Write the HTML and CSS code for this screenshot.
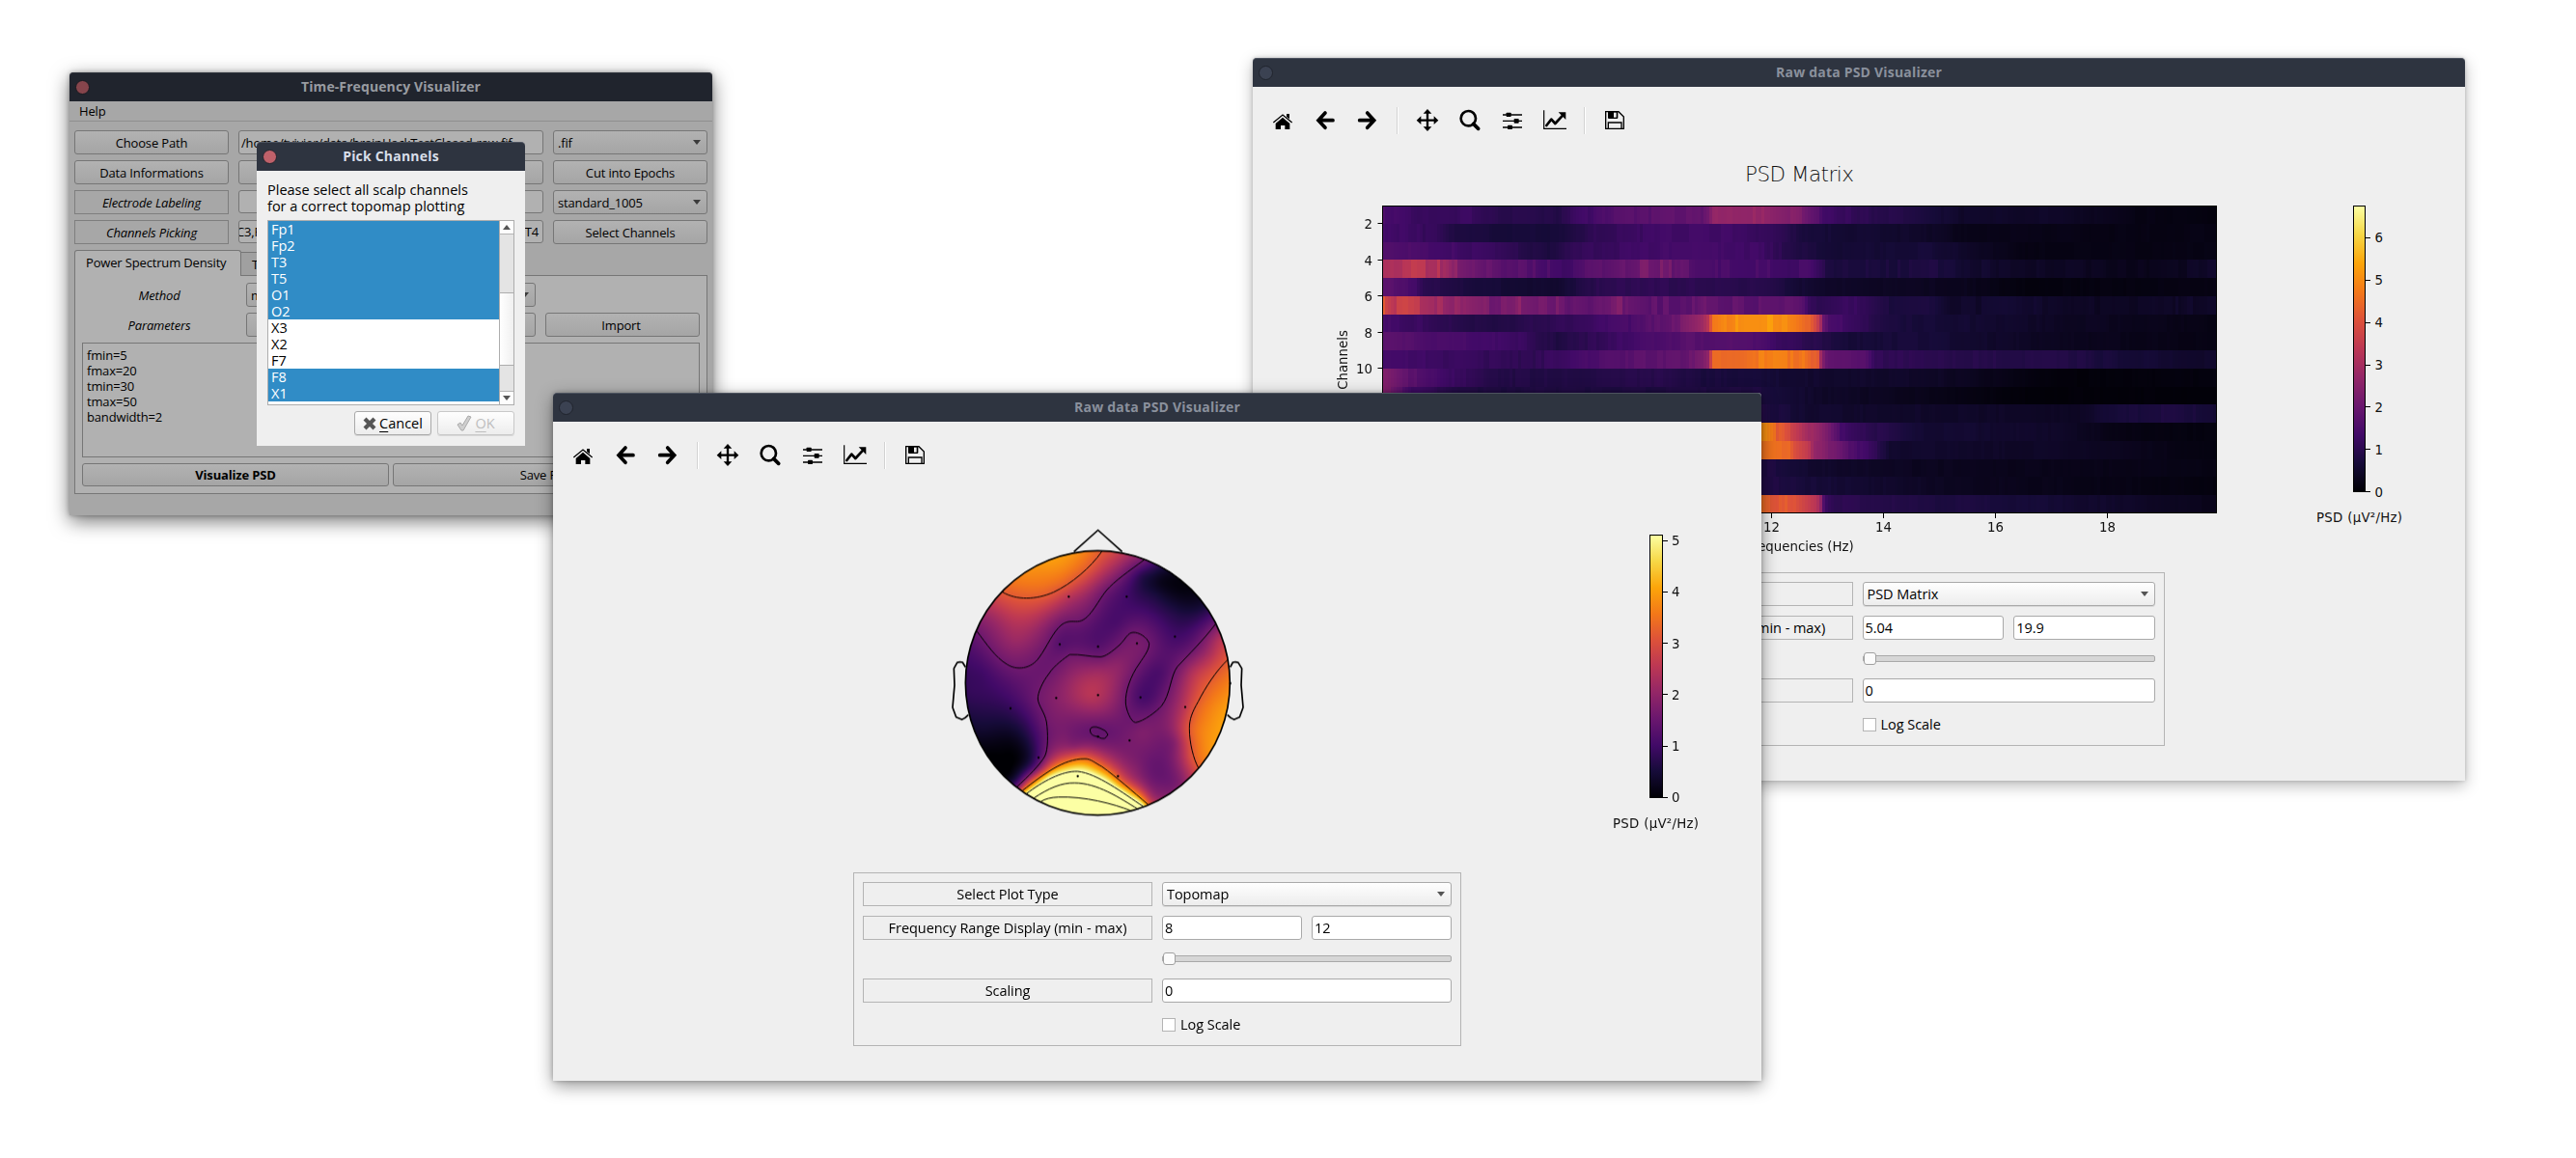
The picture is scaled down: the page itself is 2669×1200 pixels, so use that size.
FILE: index.html
```html
<!DOCTYPE html>
<html lang="en">
<head>
<meta charset="utf-8">
<title>Time-Frequency Visualizer</title>
<link rel="stylesheet" href="styles.css">
</head>
<body>
<svg class="defs" width="0" height="0" aria-hidden="true">
  <defs>
    <linearGradient id="inferno" x1="0" y1="1" x2="0" y2="0">
      <stop offset="0" stop-color="#000004"/><stop offset=".1" stop-color="#160b39"/>
      <stop offset=".2" stop-color="#420a68"/><stop offset=".3" stop-color="#6a176e"/>
      <stop offset=".4" stop-color="#932667"/><stop offset=".5" stop-color="#bc3754"/>
      <stop offset=".6" stop-color="#dd513a"/><stop offset=".7" stop-color="#f37819"/>
      <stop offset=".8" stop-color="#fca50a"/><stop offset=".9" stop-color="#f6d746"/>
      <stop offset="1" stop-color="#fcffa4"/>
    </linearGradient>
    <symbol id="i-home" viewBox="0 0 72 72"><path d="M7 42 36 18 65 42" fill="none" stroke="#000" stroke-width="4"/><path d="M48 15h9v16l-9-7zM14 45 36 26l22 19v18H43V51H30v12H14z"/></symbol>
    <symbol id="i-back" viewBox="0 0 72 72"><path d="M36 12 15 35l21 23M18 35h42" fill="none" stroke="#000" stroke-width="11" stroke-linecap="round"/></symbol>
    <symbol id="i-fwd" viewBox="0 0 72 72"><path d="M35 12 56 35 35 58M53 35H11" fill="none" stroke="#000" stroke-width="11" stroke-linecap="round"/></symbol>
    <symbol id="i-move" viewBox="0 0 72 72"><path d="M36 8v56M8 35h56" stroke="#000" stroke-width="7"/><path d="M36 0 49 14H23zM36 69 23 55h26zM2 35 16 22v26zM70 35 56 48V22z"/></symbol>
    <symbol id="i-zoom" viewBox="0 0 72 72"><circle cx="31" cy="29" r="23" fill="none" stroke="#000" stroke-width="8"/><path d="M47 46 62 61" stroke="#000" stroke-width="11" stroke-linecap="round"/></symbol>
    <symbol id="i-sub" viewBox="0 0 72 72"><path d="M6 18h60M6 37h60M6 57h60" stroke="#000" stroke-width="4"/><rect x="17" y="11" width="15" height="13" rx="2"/><rect x="41" y="30" width="15" height="14" rx="2"/><rect x="21" y="50" width="15" height="13" rx="2"/></symbol>
    <symbol id="i-edit" viewBox="0 0 72 72"><path d="M2 4v57h70" fill="none" stroke="#000" stroke-width="3.5"/><path d="M10 51 25 32l12 13 24-26" fill="none" stroke="#000" stroke-width="8" stroke-linejoin="round" stroke-linecap="round"/><path d="M47 10h23v23z"/></symbol>
    <symbol id="i-save" viewBox="0 0 72 72"><path d="M8 8h40l16 16v37H8zM16 61V42h41v19" fill="none" stroke="#000" stroke-width="4"/><path d="M15 8h31v19q0 3-3 3H18q-3 0-3-3z"/><rect x="33" y="11" width="8" height="15" fill="#efefef"/></symbol>
  </defs>
</svg>

<div class="window main">
  <header class="titlebar"><i class="close"></i><span>Time-Frequency Visualizer</span></header>
  <nav class="menu">Help</nav>
  <div class="form">
    <div class="btn">Choose Path</div><div class="field path">/home/tvivier/data/brainHackTestClosed-raw.fif</div><div class="btn combo">.fif<b class="arrow"></b></div>
    <div class="btn">Data Informations</div><div class="btn"></div><div class="btn">Cut into Epochs</div>
    <div class="lbl">Electrode Labeling</div><div class="field"></div><div class="btn combo">standard_1005<b class="arrow"></b></div>
    <div class="lbl">Channels Picking</div><div class="field picks"><span>C3,F4,Fz</span><span>P4,T6,T4</span></div><div class="btn">Select Channels</div>
  </div>
  <div class="tabs"><div class="tab on">Power Spectrum Density</div><div class="tab">Time-Frequency</div></div>
  <div class="pane">
    <div class="row"><div class="cap">Method</div><div class="btn combo wide">multitaper<b class="arrow"></b></div></div>
    <div class="row"><div class="cap">Parameters</div><div class="btn wide"></div><div class="btn imp">Import</div></div>
    <div class="area">fmin=5<br>fmax=20<br>tmin=30<br>tmax=50<br>bandwidth=2</div>
    <div class="row actions"><div class="btn strong">Visualize PSD</div><div class="btn">Save PSD</div></div>
  </div>
</div>

<div class="window dialog">
  <header class="titlebar"><i class="close"></i><span>Pick Channels</span></header>
  <p class="ask">Please select all scalp channels<br>for a correct topomap plotting</p>
  <div class="list">
    <ul>
      <li class="sel">Fp1</li><li class="sel">Fp2</li><li class="sel">T3</li><li class="sel">T5</li><li class="sel">O1</li><li class="sel">O2</li>
      <li>X3</li><li>X2</li><li>F7</li><li class="sel">F8</li><li class="sel">X1</li>
    </ul>
    <div class="scroll"><div class="end"><b class="arrow up"></b></div><div class="thumb"></div><div class="end"><b class="arrow"></b></div></div>
  </div>
  <div class="buttons">
    <div class="btn"><svg width="14" height="14" viewBox="0 0 14 14"><path d="M3.5 3.5l7 7M10.500 3.500l-7 7" stroke="#555" stroke-width="4.200" stroke-linecap="square"/></svg><span><u>C</u>ancel</span></div>
    <div class="btn off"><svg width="16" height="17" viewBox="0 0 16 17"><path d="M1 10l3-2 2 3 6-10 3 1-8 14H5z" fill="#cfcfcf" stroke="#aaa"/></svg><span><u>O</u>K</span></div>
  </div>
</div>

<div class="window matrix">
  <header class="titlebar"><i class="close"></i><span>Raw data PSD Visualizer</span></header>
  <div class="toolbar">
    <svg><use href="#i-home"/></svg><svg><use href="#i-back"/></svg><svg><use href="#i-fwd"/></svg><hr>
    <svg><use href="#i-move"/></svg><svg><use href="#i-zoom"/></svg><svg><use href="#i-sub"/></svg><svg><use href="#i-edit"/></svg><hr>
    <svg><use href="#i-save"/></svg>
  </div>
  <svg class="figure" width="1256" height="433" viewBox="1298 160 1256 433">
    <text class="thin" x="1808" y="188" textLength="113">PSD Matrix</text>
    <foreignObject x="1432" y="213" width="865" height="319"><canvas id="heat" width="865" height="319"></canvas></foreignObject>
    <rect class="frame" x="1432.500" y="213.500" width="864" height="318"/>
    <path class="tick" d="M1427.500 231.500h5M1427.500 269.500h5M1427.500 306.500h5M1427.500 344.500h5M1427.500 381.500h5M1835.500 532v5M1951.500 532v5M2067.500 532v5M2183.500 532v5"/>
    <g class="end-text"><text x="1422" y="236.500">2</text><text x="1422" y="274.500">4</text><text x="1422" y="311.500">6</text><text x="1422" y="349.500">8</text><text x="1422" y="386.500">10</text></g>
    <g class="mid-text"><text x="1835.500" y="551">12</text><text x="1951.500" y="551">14</text><text x="2067.500" y="551">16</text><text x="2183.500" y="551">18</text><text x="1865" y="571">Frequencies (Hz)</text><text transform="translate(1396 373) rotate(-90)">Channels</text></g>
    <rect class="frame" x="2438.500" y="213.500" width="12" height="296" fill="url(#inferno)"/>
    <path class="tick" d="M2451 246.500h5M2451 290.500h5M2451 334.500h5M2451 378.500h5M2451 421.500h5M2451 465.500h5M2451 509.500h5"/>
    <g><text x="2460.500" y="251">6</text><text x="2460.500" y="295">5</text><text x="2460.500" y="339">4</text><text x="2460.500" y="383">3</text><text x="2460.500" y="427">2</text><text x="2460.500" y="471">1</text><text x="2460.500" y="515">0</text><text x="2400" y="541" textLength="89">PSD (µV²/Hz)</text></g>
  </svg>
  <div class="panel">
    <div class="lbl">Select Plot Type</div><div class="btn combo">PSD Matrix<b class="arrow"></b></div>
    <div class="lbl">Frequency Range Display (min - max)</div><div class="pair"><div class="field">5.04</div><div class="field">19.9</div></div>
    <div></div><div class="slider"><i></i></div>
    <div class="lbl">Scaling</div><div class="field">0</div>
    <div></div><div class="check"><i></i>Log Scale</div>
  </div>
</div>

<div class="window topo">
  <header class="titlebar"><i class="close"></i><span>Raw data PSD Visualizer</span></header>
  <div class="toolbar">
    <svg><use href="#i-home"/></svg><svg><use href="#i-back"/></svg><svg><use href="#i-fwd"/></svg><hr>
    <svg><use href="#i-move"/></svg><svg><use href="#i-zoom"/></svg><svg><use href="#i-sub"/></svg><svg><use href="#i-edit"/></svg><hr>
    <svg><use href="#i-save"/></svg>
  </div>
  <svg class="figure" width="1252" height="397" viewBox="573 507 1252 397">
    <foreignObject x="970" y="530" width="340" height="330"><canvas id="scalp" width="340" height="330"></canvas></foreignObject>
    <svg x="970" y="530" width="340" height="330" viewBox="0 0 1020 990" fill="none" stroke="#000">
      <g stroke-width="5" stroke-linejoin="round">
        <circle cx="502" cy="533" r="411"/>
        <path d="M428 125 503 58 578 125"/>
        <path d="M91 484 82 469Q73 466 65 470L55 488 57 540 51 609 62 639 80 647Q90 643 100 632M914 484 922 469Q931 466 939 470L950 488 948 540 954 609 943 639 926 647Q915 643 905 632"/>
      </g>
      <g stroke-width="3">
        <path d="M515 124C480 175 420 225 365 251C310 275 250 277 205 250"/>
        <path d="M647 150C600 185 555 215 528 247C500 282 475 341 440 342C425 343 410 338 390 352C362 375 345 420 320 454C295 490 250 495 220 475C185 455 155 410 127 373"/>
        <path d="M868 350C835 395 780 450 750 482C728 510 728 570 700 605C685 622 645 652 620 656C605 656 590 615 589 595C587 560 605 510 630 475C650 445 662 430 662 410C655 390 630 375 612 376C595 377 590 395 570 415C545 437 525 452 510 452C475 452 450 443 415 445C400 455 365 480 350 505C330 530 315 565 316 583C318 605 338 625 343 655C348 690 348 740 338 760C325 785 285 825 250 857"/>
        <path d="M907 460C870 495 835 550 815 590C795 625 787 645 787 675C787 720 800 770 815 797"/>
        <path d="M268 868C330 820 395 768 462 769C480 768 495 783 515 793C560 825 610 870 660 912"/>
        <path d="M280 878C330 840 390 806 440 808C500 814 580 875 645 918"/>
        <path d="M302 892C350 860 390 843 430 844C500 844 570 890 628 926"/>
        <path d="M325 902Q345 889 380 888C460 885 550 908 607 931"/>
        <path d="M482 672Q475 678 480 688 484 698 502 700 514 708 524 706L534 694 526 682Q508 672 498 670 488 669 482 672z"/>
      </g>
      <path class="dots" d="M412 265h.1M592 265h.1M384 413h.1M503 420h.1M624 410h.1M742 389h.1M373 580h.1M503 571h.1M635 578h.1M774 608h.1M231 612h.1M503 700h.1M601 712h.1M318 765h.1M440 823h.1M565 823h.1M914 534h.1"/>
    </svg>
    <rect class="frame" x="1709.500" y="554.500" width="13" height="272" fill="url(#inferno)"/>
    <path class="tick" d="M1723 560.500h5M1723 613.500h5M1723 666.500h5M1723 719.500h5M1723 773.500h5M1723 826.500h5"/>
    <g><text x="1732" y="565">5</text><text x="1732" y="618">4</text><text x="1732" y="672">3</text><text x="1732" y="725">2</text><text x="1732" y="778">1</text><text x="1732" y="831">0</text><text x="1671" y="858" textLength="89">PSD (µV²/Hz)</text></g>
  </svg>
  <div class="panel">
    <div class="lbl">Select Plot Type</div><div class="btn combo">Topomap<b class="arrow"></b></div>
    <div class="lbl">Frequency Range Display (min - max)</div><div class="pair"><div class="field">8</div><div class="field">12</div></div>
    <div></div><div class="slider"><i></i></div>
    <div class="lbl">Scaling</div><div class="field">0</div>
    <div></div><div class="check"><i></i>Log Scale</div>
  </div>
</div>
<script src="plots.js"></script>
</body>
</html>
```
FILE: styles.css
```css
* { box-sizing: border-box; }
body { margin: 0; width: 2669px; height: 1200px; position: relative; overflow: hidden; background: #fff; color: #000; font-family: "Open Sans", "Noto Sans", sans-serif; }
.defs { position: absolute; }

/* windows on the desktop */
.window { position: absolute; isolation: isolate; display: flex; flex-direction: column; background: #efefef; border-radius: 4px 4px 0 0; font-size: 14.5px; letter-spacing: -.05px; box-shadow: 0 5px 16px rgba(0,0,0,.28), 0 0 4px rgba(0,0,0,.18); }
.main { left: 72px; top: 75px; width: 666px; height: 459px; background: #a7a7a7; font-size: 13px; letter-spacing: -.16px; box-shadow: 0 6px 20px rgba(0,0,0,.55), 0 0 5px rgba(0,0,0,.3); }
.dialog { left: 266px; top: 147px; width: 278px; height: 315px; box-shadow: none; letter-spacing: 0; }
.matrix { left: 1298px; top: 60px; width: 1256px; height: 749px; }
.topo { left: 573px; top: 407px; width: 1252px; height: 713px; box-shadow: 0 5px 18px rgba(0,0,0,.42), 0 0 5px rgba(0,0,0,.25); }

.titlebar { height: 30px; flex: none; display: grid; grid-template-columns: 28px 1fr 28px; align-items: center; background: #2e3440; border-radius: 4px 4px 0 0; border-top: 1px solid #4d535f; color: #8a909c; font-weight: 700; font-size: 14px; line-height: 27px; padding-bottom: 2px; letter-spacing: .2px; text-align: center; }
.close { width: 15px; height: 15px; margin: 1px 0 0 6px; border-radius: 50%; background: #3b4252; border: 1px solid #20242d; }
.main .titlebar { background: #20242d; border-top-color: #30343c; color: #989ba1; letter-spacing: .1px; }
.main .close { background: #86454c; border-color: #171a20; }
.dialog .titlebar { color: #d8dee9; }
.dialog .close { background: #bf616a; }

/* widgets */
.btn, .lbl, .field { height: 25px; display: flex; align-items: center; justify-content: center; border: 1px solid #a9a9a9; white-space: nowrap; overflow: hidden; }
.btn, .field { border-radius: 3px; }
.btn { background: linear-gradient(#fefefe, #ededed); box-shadow: 0 1px 0 #d8d8d8; }
.lbl { border-color: #b4b4b4; }
.field { background: #fff; justify-content: flex-start; padding-left: 2px; }
.combo { justify-content: space-between; padding: 0 6px 0 4px; }
.arrow { border: 4px solid transparent; border-top: 5px solid #555; border-bottom: 0; }
.arrow.up { border-top: 0; border-bottom: 5px solid #555; }

/* shaded main window */
.menu { height: 21px; flex: none; padding-left: 10px; line-height: 20px; border-bottom: 1px solid #8f8f8f; }
.form { display: grid; grid-template-columns: 160px 316px 160px; gap: 6px 10px; padding: 9px 5px 0; }
.main .btn { background: linear-gradient(#b2b2b2, #a5a5a5); border-color: #767676; box-shadow: none; }
.main .field { background: #b1b1b1; border-color: #767676; height: 24px; }
.main .path { height: 25px; }
.main .lbl { border-color: #7e7e7e; font-style: italic; }
.main .arrow { border-top-color: #3b3b3b; }
.picks { justify-content: space-between; padding: 0 4px 0 0; }
.picks span:first-child { margin-left: -3px; }
.tabs { display: flex; align-items: flex-end; margin: 6px 5px -1px; height: 27px; flex: none; z-index: 1; }
.tab { height: 25px; padding: 0 11px; line-height: 25px; border: 1px solid #767676; border-left: 0; background: #a0a0a0; }
.tab.on { height: 27px; width: 173px; border-left: 1px solid #767676; border-bottom: 0; border-radius: 3px 3px 0 0; background: #b1b1b1; }
.pane { margin: 0 5px; height: 227px; border: 1px solid #767676; background: #b1b1b1; padding: 7px; display: flex; flex-direction: column; gap: 6px; }
.row { display: flex; gap: 10px; }
.cap { width: 160px; line-height: 26px; height: 25px; text-align: center; font-style: italic; }
.wide { width: 300px; }
.imp { width: 160px; padding-right: 3px; }
.area { height: 119px; border: 1px solid #767676; padding: 4px; line-height: 16px; }
.actions { gap: 4px; }
.actions .btn { flex: 1; height: 24px; }
.strong { font-weight: 700; }

/* channel picker */
.ask { margin: 11px 11px 0; line-height: 17px; }
.list { margin: 6px 11px 0; height: 192px; flex: none; border: 1px solid #adadad; background: #fff; display: flex; }
.list ul { flex: 1; margin: 0; padding: 0; list-style: none; }
.list li { height: 17px; line-height: 17px; padding-left: 3px; }
.sel { background: #308cc6; color: #fff; }
.scroll { width: 15px; border-left: 1px solid #adadad; background: #e4e4e4; display: flex; flex-direction: column; justify-content: space-between; }
.end { height: 14px; background: #fdfdfd; border-bottom: 1px solid #b5b5b5; display: grid; place-items: center; }
.end:last-child { border-bottom: 0; border-top: 1px solid #b5b5b5; }
.thumb { height: 76px; margin-top: 34px; background: linear-gradient(90deg, #fff, #f0f0f0); border: solid #adadad; border-width: 1px 0; }
.buttons { display: flex; justify-content: flex-end; gap: 6px; margin: 6px 11px 0; }
.buttons .btn { width: 80px; gap: 3px; }
.buttons .off { color: #bebebe; border-color: #c8c8c8; }
.buttons u { text-underline-offset: 3px; }

/* plot windows */
.toolbar { height: 70px; flex: none; padding-left: 9px; display: flex; align-items: center; }
.toolbar svg { width: 44px; height: 24px; }
.toolbar hr { width: 2px; height: 28px; margin: 0 8px; border: 0; background: linear-gradient(90deg, #d2d2d2 50%, #fff 50%); }
.figure { display: block; flex: none; font-family: "DejaVu Sans", sans-serif; font-size: 13.330px; letter-spacing: 0; fill: #111; }
.figure canvas { display: block; }
.figure .thin { font-size: 21.500px; font-weight: 200; }
.frame { stroke: #000; }
.frame:not([fill]) { fill: none; }
.tick { stroke: #000; fill: none; }
.end-text { text-anchor: end; }
.mid-text { text-anchor: middle; }
.dots { stroke: #000; stroke-width: 7; stroke-linecap: round; }
.panel { align-self: center; width: 630px; height: 180px; flex: none; border: 1px solid #b4b4b4; padding: 9px; display: grid; grid-template-columns: 1fr 1fr; grid-template-rows: 25px 25px 20px 25px 25px; gap: 10px; }
.matrix .panel { align-self: flex-end; width: 637px; margin-right: 311px; }
.pair { display: flex; gap: 10px; }
.pair .field { flex: 1; }
.slider { display: flex; align-items: center; position: relative; top: -1px; }
.slider::before { content: ""; width: 100%; height: 5px; border: 1px solid #a9a9a9; border-radius: 2px; background: #d6d6d6; }
.slider i { position: absolute; left: 1px; width: 13px; height: 13px; border: 1px solid #a0a0a0; border-radius: 3px; background: #fbfbfb; }
.check { display: flex; align-items: center; gap: 5px; }
.check i { width: 14px; height: 14px; border: 1px solid #b4b4b4; background: #fff; }
```
FILE: plots.js
```js
const STOPS = [[0,0,4],[22,11,57],[66,10,104],[106,23,110],[147,38,103],[188,55,84],[221,81,58],[243,120,25],[252,165,10],[246,215,70],[252,255,164]];
function inferno(v) {
  v = Math.max(0, Math.min(1, v)) * 10;
  const i = Math.min(9, Math.floor(v)), f = v - i;
  return STOPS[i].map((c, k) => Math.round(c + (STOPS[i + 1][k] - c) * f));
}

// power per channel: pairs of plot x and level
const ROWS = [
  [0,.22,40,.17,90,.18,120,.14,180,.13,200,.18,240,.24,300,.27,335,.28,342,.38,365,.41,400,.4,430,.35,450,.27,454,.2,500,.15,550,.12,600,.07,700,.07,780,.03,864,.02],
  [0,.21,60,.16,75,.11,180,.1,220,.16,300,.2,350,.2,400,.17,440,.1,560,.07,600,.04,760,.03,864,.03],
  [0,.24,60,.21,120,.17,170,.11,200,.16,300,.21,390,.19,430,.12,480,.09,560,.1,660,.03,864,.03],
  [0,.46,30,.48,60,.46,75,.38,110,.3,150,.24,190,.2,220,.25,270,.34,300,.3,330,.23,400,.21,440,.2,460,.12,570,.11,640,.07,800,.04,864,.07],
  [0,.26,30,.22,45,.14,100,.1,180,.08,230,.16,330,.15,400,.13,450,.07,600,.05,660,.02,864,.03],
  [0,.6,15,.5,40,.5,80,.38,110,.33,140,.36,180,.31,210,.27,240,.33,280,.27,330,.28,430,.25,450,.15,480,.18,520,.11,570,.12,590,.07,660,.08,740,.06,864,.07],
  [0,.21,60,.16,110,.12,200,.17,260,.22,300,.3,330,.4,338,.5,340,.68,355,.74,375,.77,400,.77,430,.7,445,.62,452,.5,456,.3,462,.22,490,.18,520,.11,700,.06,864,.03],
  [0,.26,70,.22,140,.18,180,.12,250,.19,310,.25,380,.24,420,.17,480,.1,560,.1,700,.05,864,.03],
  [0,.2,80,.18,150,.15,200,.2,240,.25,310,.28,330,.33,338,.4,340,.66,370,.68,400,.71,440,.68,450,.6,454,.35,460,.27,500,.24,512,.16,640,.13,700,.13,760,.1,864,.07],
  [0,.36,30,.26,60,.2,110,.13,200,.12,280,.14,330,.11,450,.08,560,.07,700,.01,864,.02],
  [0,.36,30,.2,80,.12,388,.12,450,.07,600,.03,660,.01,864,.01],
  [0,.3,388,.13,440,.08,720,.06,760,.1,820,.12,864,.09],
  [0,.3,388,.78,400,.7,410,.62,425,.55,445,.42,460,.33,475,.2,510,.14,560,.09,700,.07,760,.03,864,.02],
  [0,.3,388,.68,420,.68,425,.6,440,.52,447,.42,470,.3,490,.22,510,.16,525,.08,720,.06,864,.02],
  [0,.2,388,.13,440,.08,560,.05,864,.03],
  [0,.2,388,.13,440,.1,600,.05,864,.02],
  [0,.3,388,.66,425,.6,445,.5,452,.45,456,.25,460,.16,520,.13,700,.09,760,.07,864,.04]
];
function level(row, x) {
  let i = 0;
  while (i < row.length - 4 && row[i + 2] < x) i += 2;
  const f = Math.min(1, (x - row[i]) / (row[i + 2] - row[i]));
  return row[i + 1] + (row[i + 3] - row[i + 1]) * f;
}
let seed = 7;
const rand = () => (seed = (seed * 16807) % 2147483647) / 2147483647;
const heat = document.getElementById('heat').getContext('2d');
ROWS.forEach((row, r) => {
  const y0 = Math.round(r * 18.76), y1 = Math.round((r + 1) * 18.76);
  const rough = r === 3 || r === 5 ? .1 : .05;
  let noise = 0;
  for (let x = 0; x < 865; x += 3) {
    if (rand() < .5) noise = (rand() - .5) * 2 * rough;
    const v = level(row, x);
    const [a, b, c] = inferno(v + noise * Math.min(v, .5) + noise * .05);
    heat.fillStyle = `rgb(${a},${b},${c})`;
    heat.fillRect(x, y0, 3, y1 - y0);
  }
});

// scalp samples: x, y, level
const PTS = [];
const add = (v, list) => list.forEach(([x, y]) => PTS.push([x, y, v]));
add(.62, [[515,124],[470,180],[400,232],[340,262],[280,271],[205,250],[907,460],[850,525],[805,610],[787,680],[800,765],[815,797]]);
add(.31, [[647,150],[580,200],[525,250],[485,305],[440,342],[395,348],[350,405],[315,460],[255,487],[200,460],[127,373],[868,350],[800,430],[745,490],[720,560],[700,605],[650,642],[615,656],[589,595],[610,510],[645,455],[660,415],[612,377],[570,415],[510,452],[415,446],[350,507],[316,583],[343,655],[345,730],[310,800],[250,857]]);
add(.68, [[268,868],[340,812],[400,779],[455,769],[515,793],[580,845],[660,912]]);
add(1.02, [[280,880],[350,830],[430,808],[500,824],[600,887],[645,918]]);
add(1.35, [[305,892],[360,857],[430,844],[500,856],[570,890],[625,925]]);
add(1.6, [[325,902],[400,888],[500,898],[607,931]]);
PTS.push([320,180,.75],[300,150,.79],[240,330,.5],[180,330,.43],[250,400,.42],[412,265,.49],[560,150,.49],[700,220,.04],[750,210,.02],[680,260,.11],[840,290,.1],[740,310,.12],[592,265,.2],[640,200,.14],[640,340,.25],[742,389,.2],[384,413,.25],[503,410,.24],[560,350,.22],[640,580,.21],[690,500,.22],[230,540,.24],[150,500,.2],[110,560,.17],[230,610,.17],[150,680,.08],[200,760,0],[230,700,.05],[280,650,.18],[210,820,0],[240,800,.02],[290,780,.12],[480,570,.49],[400,560,.4],[503,500,.43],[503,620,.4],[560,480,.39],[420,640,.35],[400,700,.34],[503,688,.28],[540,620,.37],[601,712,.33],[640,690,.35],[680,740,.31],[700,860,.33],[620,800,.37],[760,840,.36],[740,650,.42],[740,720,.36],[774,608,.5],[840,640,.72],[880,700,.79],[850,740,.76],[900,550,.72],[850,440,.45],[880,400,.48],[430,730,.38],[800,500,.48],[760,560,.42],[450,930,1.7]);
const kernel = (ax, ay, bx, by) => {
  const d = ((ax - bx) ** 2 + (ay - by) ** 2) / 1e5;
  return d ? d * Math.log(d) : 0;
};
// thin-plate spline weights by Gaussian elimination
const n = PTS.length, m = n + 3, A = [];
for (let i = 0; i < m; i++) {
  const row = new Float64Array(m + 1);
  if (i < n) {
    const [x, y, v] = PTS[i];
    for (let j = 0; j < n; j++) row[j] = kernel(x, y, PTS[j][0], PTS[j][1]);
    row[i] += .002;
    row[n] = 1; row[n + 1] = x / 1000; row[n + 2] = y / 1000; row[m] = v;
  } else {
    for (let j = 0; j < n; j++) row[j] = i === n ? 1 : PTS[j][i - n - 1] / 1000;
  }
  A.push(row);
}
for (let c = 0; c < m; c++) {
  let p = c;
  for (let r = c + 1; r < m; r++) if (Math.abs(A[r][c]) > Math.abs(A[p][c])) p = r;
  [A[c], A[p]] = [A[p], A[c]];
  for (let r = 0; r < m; r++) if (r !== c) {
    const f = A[r][c] / A[c][c];
    if (f) for (let k = c; k <= m; k++) A[r][k] -= f * A[c][k];
  }
}
const W = A.map((row, i) => row[m] / row[i]);
const scalp = document.getElementById('scalp').getContext('2d');
const img = scalp.createImageData(340, 330);
for (let py = 0; py < 330; py++) for (let px = 0; px < 340; px++) {
  const x = px * 3 + 1.5, y = py * 3 + 1.5;
  if ((x - 502) ** 2 + (y - 533) ** 2 > 411 * 411) continue;
  let v = W[n] + W[n + 1] * x / 1000 + W[n + 2] * y / 1000;
  for (let j = 0; j < n; j++) v += W[j] * kernel(x, y, PTS[j][0], PTS[j][1]);
  img.data.set([...inferno(v), 255], (py * 340 + px) * 4);
}
scalp.putImageData(img, 0, 0);
```
